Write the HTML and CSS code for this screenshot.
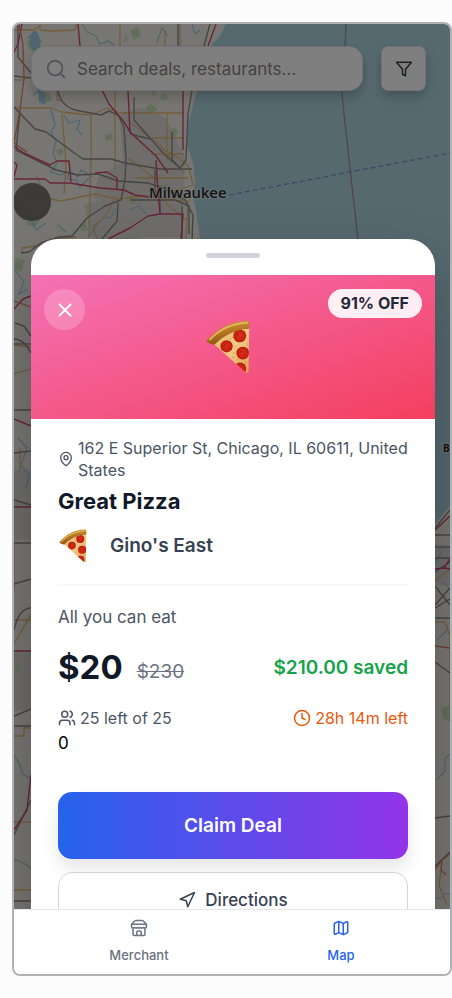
FILE: index.html
```html
<!DOCTYPE html>
<html lang="en">
<head>
<meta charset="utf-8">
<meta name="viewport" content="width=device-width, initial-scale=1">
<title>Great Pizza</title>
<link rel="stylesheet" href="styles.css">
</head>
<body>
<svg class="defs" aria-hidden="true">
  <defs>
    <linearGradient id="cheese" x1="0" y1="0" x2="1" y2="1"><stop offset="0" stop-color="#e9b768"/><stop offset=".5" stop-color="#f3c883"/><stop offset="1" stop-color="#e3a24f"/></linearGradient>
    <linearGradient id="crust" x1="0" y1="0" x2=".3" y2="1"><stop offset="0" stop-color="#dca746"/><stop offset=".5" stop-color="#b97a26"/><stop offset="1" stop-color="#8f5013"/></linearGradient>
    <radialGradient id="pepperoni"><stop offset="0" stop-color="#d92d17"/><stop offset=".75" stop-color="#c92312"/><stop offset="1" stop-color="#a3190b"/></radialGradient>
    <clipPath id="slice"><path d="M56 104C85 75 122 58 160 56L158 184Q156 191 148 186Z"/></clipPath>
    <symbol id="pizza" viewBox="32 32 132 160" preserveAspectRatio="xMinYMid meet">
      <path d="M56 104C85 75 122 58 160 56L158 184Q156 191 148 186Z" fill="url(#cheese)"/>
      <g clip-path="url(#slice)">
        <g fill="url(#pepperoni)"><circle cx="132" cy="79" r="19"/><circle cx="93" cy="110" r="18"/><circle cx="141" cy="130" r="19"/><circle cx="133" cy="176" r="18"/></g>
        <g fill="#b66a25"><circle cx="110" cy="83" r="1.5"/><circle cx="118" cy="110" r="1.5"/><circle cx="114" cy="130" r="1.5"/><circle cx="112" cy="143" r="1.5"/><circle cx="154" cy="103" r="1.5"/><circle cx="149" cy="159" r="1.5"/><circle cx="125" cy="150" r="1.5"/><circle cx="75" cy="103" r="1.5"/><circle cx="104" cy="88" r="1.5"/></g>
        <g fill="#9f1a0d"><circle cx="126" cy="74" r="2"/><circle cx="138" cy="84" r="2"/><circle cx="87" cy="106" r="2"/><circle cx="98" cy="114" r="2"/><circle cx="136" cy="126" r="2"/><circle cx="146" cy="135" r="2"/></g>
      </g>
      <path d="M34 93C64 58 106 35 155 34Q164 36 160 58C118 61 84 78 58 104Q50 107 36 98Z" fill="url(#crust)"/>
      <path d="M43 90C72 60 112 42 155 40" fill="none" stroke="#e6b95c" stroke-width="5" stroke-linecap="round"/>
    </symbol>
  </defs>
</svg>

<main class="phone">
  <section class="screen">
    <svg class="map" viewBox="14 24 436 885" preserveAspectRatio="xMidYMin slice" role="img" aria-label="Map of the Milwaukee area">
      <path d="M14 24H450V909H14Z" fill="#f0ede5"/>
      <g fill="#dcdad8">
        <path d="M120 115l20-8 25 10 20 40-2 80h-45l-20-25-25-15 5-20 25-15zM125 48l20 5 6 25-14 12-12-10zM84 205l20-8 26 8 12 34H92z"/>
        <path d="M14 470h17v70H14zM435 545h15v40h-15zM14 650h17v60H14z"/>
      </g>
      <g fill="#c6dfb6">
        <path d="M26 42l5-3 4 6-5 6zM130 30l8-3 3 9-7 4zM97 57l6 1 2 6-8 2zM56 150l6-2 2 5-6 3zM25 215l6-3 9 8-5 7-8-2zM105 135l7-2 1 6-7 2zM145 108l6-4 7 5-7 6zM80 224l6-2 2 8-7 1zM42 94l6-2 4 8-7 3zM130 195l7 1-2 8-6-1zM90 62l6 2-1 9-7-3zM172 128l6 2-2 7-6-2zM19 185l7 1-1 6-6 1zM16 258l9 2-4 12-7-3zM441 709l9-4v17l-7-4zM15 665l5-2 1 7-6 1z"/>
        <path d="M126 31l2 9-5 2zM138 75l7-4 2 8-7 3zM161 185l7-3 1 8-6 2zM152 89l5 1-1 6-5-1zM70 69l5-2 2 7-6 1zM160 95l6-2 2 6-7 2z" opacity=".8"/>
      </g>
      <g fill="none" stroke="#9bcbe0" stroke-width="1.2">
        <path d="M82 24l5 8 9 4 4 8 8-3 6 4M157 42l5-14 6 8M192 24l3 10 5-4M64 115l5 8 11-3-3 9 5 6M51 110l4 15-4 7 5 9-3 12 4 10-6 9 9 3 10-4 8 6 3-7 11 7M70 170l-3 9 9 1 4 7 9-9M33 95l5-4 4 6 3-7M22 220l8-2 6 12 10-7M90 236l4-8 8-9 9-2 5-8M104 57l6 12-3 10M36 176l4 6-7 5 7 9-3 8M130 210l9-4 7 8M58 225l8 7M15 270l9 12-5 12 9-5M18 438l9 10-6 18 9 9-5 15M436 545l5 7-6 13M443 582l7 7M437 640l10-10M437 780l8-9v-12l5-5M14 755l5 8 4 11 8 5M14 859l7 3 6 3 4 4M444 894h6M435 899l9-2"/>
        <path d="M28 38l8-6 4 9-3 11 5 6-6 4M52 63l8 7M91 70l3 8" stroke-width="2"/>
      </g>
      <path d="M33 31l5 3 1 9 2 8-4 8-4-8-4-9zM38 88l7 7 1 10-7-3z" fill="#9bcbe0"/>
      <path d="M226 24L219 37 212 44 205 71 197 90 191 113 187 128 188 148 193 163 195 181 193 196 196 211 198 224 200 240V560H400L430 530 450 506V24Z" fill="#aad3df"/>
      <g fill="none" stroke="#e5b978" stroke-width="1.3" stroke-linejoin="round">
        <path d="M14 30h20l7-5M40 25v5l14 1 21-1 2-6M120 24v22M165 30v16M180 24v22M14 80h9l3-2M14 108h38l9 4 30 3 16-7 13 5h63M57 90v10h5M91 115v40l-2 83M115 90v79M167 114v46M152 138h31M135 178h53M14 201l27-4 20 4 34-7 22 5 28-3 40 5M128 158l30 23M132 124l28 21 24 28M166 150l22 15 5 20-15 5M151 154h33M106 215l-13 12 4 12M160 198l27 23M115 196l-8 18M76 237l-23 2-11 6-20 3v5M188 200l-2 39M62 114l4 50-2 30M14 345l17 2M14 374l17-5M14 543v50M14 620h17v-6l-17 30M14 736h10v-8h7M14 822h17M14 890h17M435 622h10l5 14v70M435 581l15-12M441 870l-2 15 8 20M20 448v25"/>
      </g>
      <g fill="none" stroke="#8d8b88" stroke-width="1.4" stroke-linejoin="round">
        <path d="M18 24v33l13 16M14 76l17 2M58 90q2 15 17 20l26 5 8-4 9 4 6 12 2 31-1 22-4 20-16 6-18 12-15 18-13 1-18 6-12 9-8 1M14 107l21 22 11 3 27 20 10 7h28l14 4 35 6h32M20 112l-4 38 40 20 22 5 20-1 20 7 30 2 15 5 22 12 8 15-1 26M178 24v23M210 24l-6 22M192 90l-4 24-2 46-6 8M172 132v28l8 8M134 97v23l16 18 14 16 16 14M130 134l20 5M155 170v20l5 10v15M130 200h45l14 6v28M118 203l-1 18-15 18M182 206v33M15 323l9 3 7 10M14 339q10 0 17 14M14 410h17M14 453l17-2M14 500l17 5M14 543h17M14 584l17-5M14 630q5-22 17-22M14 716l17-7M14 726h17M14 835l17-35M14 901h17M435 528l15-18M435 535h15M435 558h15M435 572l15-10M435 586l15 19M450 588l-15 17M435 608l15-9M435 618h15M435 662l15 11M435 818l15-2M435 866l15-14"/>
      </g>
      <g fill="none" stroke="#d24a71" stroke-width="1.4" stroke-linejoin="round">
        <path d="M78 24l2 22M216 24l-8 22M22 24l-4 20-4 8M102 90l7 14 15 18 7 11 25 23 12 17M128 90l2 43M183 90v60M14 179h31l5 4h20l30 5 24 2 11 5 14 2M14 146l10 7 26 12 7-4h12l2 21M95 173l12-1 10 6v12M156 160l2 30 2 24h23l-2 25M160 214l-12 2-18 12-22 11M14 309l9-10 8-3M14 419l17 7M14 507h17M14 651h17M31 775l-4 35-13 20M435 530l15-14M435 569l9-1 6-9M444 568l6 1M14 177l3-12-3-3"/>
      </g>
      <path d="M19 24l4 20 1 35-4 31-6 33 13 9M14 301l17 6M435 646l15 2M435 869l7-9 8-6M442 860l-1 10 5 5" fill="none" stroke="#e18463" stroke-width="1.300"/>
      <path d="M14 344h17M435 547h15M346 24l-1 24-3 44 2 22 14 126" fill="none" stroke="#a58ca7" stroke-width="1.4"/>
      <path d="M229 195l221-42" fill="none" stroke="#8088cb" stroke-width="1.2" stroke-dasharray="5 3"/>
      <g class="map-label">
        <text x="149" y="198">Milwaukee</text>
        <text x="443" y="452" class="map-label-small">B</text>
      </g>
      <circle cx="32" cy="202" r="19" fill="#706f69" fill-opacity=".94"/>
    </svg>

    <form class="toolbar">
      <label class="search">
        <svg class="icon" viewBox="0 0 24 24" aria-hidden="true"><circle cx="11" cy="11" r="8"/><path d="m21 21-4.3-4.3"/></svg>
        <input type="search" placeholder="Search deals, restaurants..." aria-label="Search deals, restaurants">
      </label>
      <button class="filter" type="button" aria-label="Filter">
        <svg class="icon" viewBox="0 0 24 24" aria-hidden="true"><path d="M22 3H2l8 9.46V19l4 2v-8.54L22 3Z"/></svg>
      </button>
    </form>
    <div class="backdrop"></div>

    <article class="sheet">
      <div class="grip"><span class="handle"></span></div>
      <header class="hero">
        <button class="close" type="button" aria-label="Close">
          <svg class="icon" viewBox="0 0 24 24" aria-hidden="true"><path d="M18 6 6 18M6 6l12 12"/></svg>
        </button>
        <svg class="hero-art" role="img" aria-label="Pizza"><use href="#pizza"/></svg>
        <span class="discount">91% OFF</span>
      </header>
      <div class="details">
        <p class="address">
          <svg class="icon" viewBox="0 0 24 24" aria-hidden="true"><path d="M20 10c0 5-5.5 10.2-7.4 11.8a1 1 0 0 1-1.2 0C9.500 20.200 4 15 4 10a8 8 0 0 1 16 0"/><circle cx="12" cy="10" r="3"/></svg>
          <span>162 E Superior St, Chicago, IL 60611, United States</span>
        </p>
        <h1 class="title">Great Pizza</h1>
        <div class="brand">
          <svg class="brand-art" role="img" aria-label="Pizza"><use href="#pizza"/></svg>
          <h2 class="brand-name">Gino's East</h2>
        </div>
        <p class="summary">All you can eat</p>
        <div class="prices">
          <strong class="price">$20</strong>
          <s class="was">$230</s>
          <span class="saved">$210.00 saved</span>
        </div>
        <div class="stats">
          <span class="stat">
            <svg class="icon" viewBox="0 0 24 24" aria-hidden="true"><path d="M16 21v-2a4 4 0 0 0-4-4H6a4 4 0 0 0-4 4v2"/><circle cx="9" cy="7" r="4"/><path d="M22 21v-2a4 4 0 0 0-3-3.870M16 3.130a4 4 0 0 1 0 7.750"/></svg>
            25 left of 25
          </span>
          <span class="stat stat-time">
            <svg class="icon" viewBox="0 0 24 24" aria-hidden="true"><circle cx="12" cy="12" r="10"/><path d="M12 6v6l4 2"/></svg>
            28h 14m left
          </span>
        </div>
        <p class="count">0</p>
        <div class="actions">
          <button class="claim" type="button">Claim Deal</button>
          <button class="directions" type="button">
            <svg class="icon" viewBox="0 0 24 24" aria-hidden="true"><path d="m3 11 19-9-9 19-2-8-8-2Z"/></svg>
            Directions
          </button>
        </div>
      </div>
    </article>
  </section>

  <nav class="tabs" aria-label="Main">
    <a class="tab" href="#merchant">
      <svg class="icon" viewBox="0 0 24 24" aria-hidden="true"><path d="m2 7 4.400-4.400A2 2 0 0 1 7.800 2h8.400a2 2 0 0 1 1.400.6L22 7M4 12v8a2 2 0 0 0 2 2h12a2 2 0 0 0 2-2v-8M15 22v-4a2 2 0 0 0-2-2h-2a2 2 0 0 0-2 2v4M2 7h20M22 7v3a2 2 0 0 1-2 2 2.700 2.700 0 0 1-1.600-.6.700.7 0 0 0-.8 0A2.700 2.700 0 0 1 16 12a2.700 2.700 0 0 1-1.600-.6.700.7 0 0 0-.8 0A2.700 2.700 0 0 1 12 12a2.700 2.700 0 0 1-1.600-.6.700.7 0 0 0-.8 0A2.700 2.700 0 0 1 8 12a2.700 2.700 0 0 1-1.600-.6.700.7 0 0 0-.8 0A2.700 2.700 0 0 1 4 12a2 2 0 0 1-2-2V7"/></svg>
      Merchant
    </a>
    <a class="tab tab-active" href="#map" aria-current="page">
      <svg class="icon" viewBox="0 0 24 24" aria-hidden="true"><path d="M14.100 5.550a2 2 0 0 0 1.800 0l3.650-1.830A1 1 0 0 1 21 4.620v12.760a1 1 0 0 1-.55.9l-4.550 2.270a2 2 0 0 1-1.800 0l-4.200-2.100a2 2 0 0 0-1.800 0l-3.650 1.830A1 1 0 0 1 3 19.380V6.620a1 1 0 0 1 .55-.9L8.100 3.450a2 2 0 0 1 1.800 0ZM15 5.760v15M9 3.240v15"/></svg>
      Map
    </a>
  </nav>
</main>
</body>
</html>
```

FILE: styles.css
```css
* {
  box-sizing: border-box;
}

body {
  margin: 0;
  padding: 22px 0 22px 12px;
  height: 100vh;
  background: #fcfcfc;
  color: #000;
  font-family: Inter, "Liberation Sans", sans-serif;
}

h1,
h2,
p {
  margin: 0;
}

button,
input {
  font: inherit;
  border: 0;
  padding: 0;
}

.defs {
  position: absolute;
  width: 0;
  height: 0;
}

.icon {
  flex: none;
  width: 18px;
  height: 18px;
  fill: none;
  stroke: currentColor;
  stroke-width: 2;
  stroke-linecap: round;
  stroke-linejoin: round;
}

.phone {
  display: flex;
  flex-direction: column;
  height: 100%;
  border: 2px solid #b0b1b3;
  border-radius: 8px;
  background: #fff;
  overflow: hidden;
}

.screen {
  position: relative;
  flex: 1;
  min-height: 0;
  overflow: hidden;
}

.map,
.backdrop {
  position: absolute;
  inset: 0;
  width: 100%;
  height: 100%;
}

.backdrop {
  background: rgba(0, 0, 0, 0.5);
}

.map-label {
  font-family: "Noto Sans", sans-serif;
  font-size: 15px;
  font-weight: 500;
  fill: #222;
  stroke: #efede8;
  stroke-opacity: 0.5;
  stroke-width: 2px;
  paint-order: stroke;
}

.map-label-small {
  font-size: 10px;
  font-weight: 700;
}

.toolbar {
  position: relative;
  display: flex;
  gap: 18px;
  padding: 22px 24px 0 17px;
}

.search,
.filter {
  height: 45px;
  border: 1px solid #e5e5e8;
  background: #fff;
  box-shadow: 0 6px 12px rgba(0, 0, 0, 0.2);
}

.search {
  flex: 1;
  display: flex;
  align-items: center;
  gap: 10px;
  min-width: 0;
  padding: 0 13px;
  border-radius: 14px;
  color: #a9aab8;
}

.search .icon {
  width: 22px;
  height: 22px;
}

.search input {
  flex: 1;
  min-width: 0;
  background: transparent;
  font-size: 17px;
  outline: 0;
}

.search input::placeholder {
  color: #8c857f;
  opacity: 1;
}

.filter {
  display: grid;
  place-items: center;
  width: 45px;
  border-radius: 7px;
  color: #374151;
}

.sheet {
  position: relative;
  margin: 148px 15px 0 17px;
  border-radius: 27px 27px 0 0;
  background: #fff;
  box-shadow: 0 28px 56px rgba(0, 0, 0, 0.25);
  overflow: hidden;
}

.grip {
  display: flex;
  justify-content: center;
  height: 36px;
  padding-top: 14px;
}

.handle {
  width: 54px;
  height: 5px;
  border-radius: 3px;
  background: #d1d5db;
}

.hero {
  display: grid;
  grid-template-columns: 1fr auto 1fr;
  align-items: start;
  height: 144px;
  padding: 14px 13px;
  background: linear-gradient(to bottom right, #f472b6, #f43f5e);
}

.close {
  display: grid;
  place-items: center;
  width: 41px;
  height: 41px;
  border-radius: 50%;
  background: rgba(255, 255, 255, 0.2);
  color: #fff;
}

.close .icon {
  width: 22px;
  height: 22px;
}

.hero-art {
  align-self: center;
  width: 54px;
  height: 54px;
}

.discount {
  justify-self: end;
  padding: 0 13px;
  border-radius: 15px;
  background: rgba(255, 255, 255, 0.9);
  color: #1f2937;
  font-size: 16px;
  font-weight: 700;
  line-height: 29px;
}

.details {
  padding: 18px 27px 27px;
}

.address {
  display: flex;
  align-items: center;
  gap: 4px;
  color: #4b5563;
  font-size: 16px;
  line-height: 22px;
}

.address .icon {
  width: 16px;
  height: 16px;
}

.title {
  margin-top: 4px;
  color: #111827;
  font-size: 22px;
  font-weight: 700;
  line-height: 32px;
}

.brand {
  display: flex;
  align-items: center;
  gap: 22px;
  padding: 9px 0 18px 1px;
  border-bottom: 2px solid #f7f8f9;
}

.brand-art {
  width: 29px;
  height: 34px;
  margin: 3px 0;
}

.brand-name {
  color: #374151;
  font-size: 19px;
  font-weight: 600;
  line-height: 32px;
}

.summary {
  margin-top: 18px;
  color: #4b5563;
  font-size: 17px;
  line-height: 27px;
}

.prices {
  display: flex;
  align-items: center;
  gap: 14px;
  margin-top: 14px;
  line-height: 45px;
}

.price {
  color: #111827;
  font-size: 33px;
  font-weight: 700;
}

.was {
  padding-top: 8px;
  color: #6b7280;
  font-size: 19px;
  line-height: 36px;
}

.saved {
  margin-left: auto;
  color: #16a34a;
  font-size: 19px;
  font-weight: 600;
}

.stats {
  display: flex;
  justify-content: space-between;
  margin-top: 16px;
  font-size: 16px;
  line-height: 24px;
}

.stat {
  display: flex;
  align-items: center;
  gap: 4px;
  color: #4b5563;
}

.stat-time {
  color: #ea580c;
}

.count {
  font-size: 17px;
  line-height: 27px;
}

.actions {
  display: grid;
  gap: 13px;
  margin-top: 35px;
}

.claim {
  height: 67px;
  border-radius: 14px;
  background: linear-gradient(to right, #2563eb, #9333ea);
  box-shadow: 0 10px 18px rgba(0, 0, 0, 0.1);
  color: #fff;
  font-size: 19px;
  font-weight: 600;
}

.directions {
  display: flex;
  align-items: center;
  justify-content: center;
  gap: 9px;
  height: 56px;
  border: 1px solid #d1d5db;
  border-radius: 14px;
  background: #fff;
  color: #374151;
  font-size: 17px;
  font-weight: 500;
}

.tabs {
  display: flex;
  justify-content: space-around;
  height: 65px;
  padding: 9px 16px 0;
  border-top: 1px solid #e5e7eb;
  background: #fff;
}

.tab {
  display: flex;
  flex-direction: column;
  align-items: center;
  gap: 8px;
  color: #6b7280;
  font-size: 13px;
  font-weight: 500;
  line-height: 20px;
  text-decoration: none;
}

.tab-active {
  color: #2563eb;
}
```
